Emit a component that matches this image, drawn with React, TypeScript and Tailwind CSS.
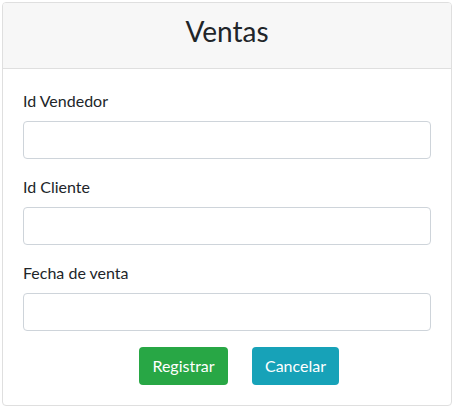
import React, { useState } from 'react';

const fields = [
  { id: 'vendedor', label: 'Id Vendedor' },
  { id: 'cliente', label: 'Id Cliente' },
  { id: 'fecha', label: 'Fecha de venta' },
];

export default function App() {
  const [values, setValues] = useState<Record<string, string>>({});

  return (
    <div className="w-[457px] h-[412px] bg-white pt-[2px] pl-[2px] font-['Lato','Open_Sans',sans-serif] text-[#212529]">
      <div className="w-[450px] border border-[#dfdfdf] rounded-[4px] overflow-hidden">
        <div className="bg-[#f7f7f7] border-b border-[#dfdfdf] px-5 pt-3 pb-3">
          <h3 className="text-[28px] leading-[33px] text-center mb-2 font-normal">Ventas</h3>
        </div>
        <div className="p-5">
          {fields.map(f => (
            <div key={f.id} className="mb-4">
              <label htmlFor={f.id} className="block text-[16px] leading-6 mb-2">
                {f.label}
              </label>
              <input
                id={f.id}
                value={values[f.id] || ''}
                onChange={e => setValues({ ...values, [f.id]: e.target.value })}
                className="block w-full h-[38px] border border-[#ced4da] rounded-[4px] px-3 text-[16px] outline-none"
              />
            </div>
          ))}
          <div className="flex justify-center gap-6 pl-6">
            <button className="w-[89px] h-[38px] rounded-[4px] bg-[#28a745] text-white text-[16px]">
              Registrar
            </button>
            <button className="w-[87px] h-[38px] rounded-[4px] bg-[#17a2b8] text-white text-[16px]">
              Cancelar
            </button>
          </div>
        </div>
      </div>
    </div>
  );
}
